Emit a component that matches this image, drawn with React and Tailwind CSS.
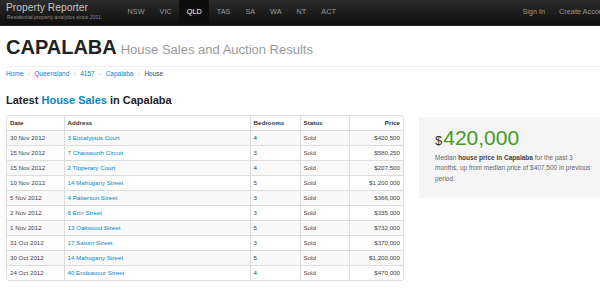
import React from 'react'

const STATES = ['NSW', 'VIC', 'QLD', 'TAS', 'SA', 'WA', 'NT', 'ACT']

const SALES = [
  { date: '30 Nov 2012', address: '3 Eucalyptus Court', beds: 4, price: '$420,500' },
  { date: '15 Nov 2012', address: '7 Chatsworth Circuit', beds: 3, price: '$580,250' },
  { date: '15 Nov 2012', address: '2 Tipperary Court', beds: 4, price: '$207,500' },
  { date: '10 Nov 2012', address: '14 Mahogany Street', beds: 5, price: '$1,200,000' },
  { date: '5 Nov 2012', address: '4 Patterson Street', beds: 3, price: '$366,000' },
  { date: '2 Nov 2012', address: '6 Erin Street', beds: 3, price: '$335,000' },
  { date: '1 Nov 2012', address: '13 Oakwood Street', beds: 5, price: '$732,000' },
  { date: '31 Oct 2012', address: '17 Saturn Street', beds: 3, price: '$370,000' },
  { date: '30 Oct 2012', address: '14 Mahogany Street', beds: 5, price: '$1,200,000' },
  { date: '24 Oct 2012', address: '40 Endeavour Street', beds: 4, price: '$470,000' },
]

const CRUMBS = ['Home', 'Queensland', '4157', 'Capalaba']

export default function App() {
  return (
    <div className="w-[600px] h-[288px] overflow-hidden bg-white" style={{ fontFamily: '"Liberation Sans", Arial, sans-serif' }}>
      <div className="w-[624px]">
        {/* Navbar */}
        <header className="h-[26px] flex items-stretch bg-gradient-to-b from-[#2c2c2c] to-[#0f0f0f] border-b border-[#252525] px-[6px]">
          <div className="w-[114px] flex flex-col pt-[2px]">
            <span className="text-[10.3px] leading-[12px] text-[#c4c4c4]">Property Reporter</span>
            <span className="text-[5.2px] leading-[7px] text-[#8a8a8a] pl-[1px]">Residential property analytics since 2011.</span>
          </div>
          <nav className="flex items-stretch">
            {STATES.map(s => (
              <a key={s}
                className={`flex items-center px-[7.5px] text-[7.3px] ${s === 'QLD' ? 'bg-[#0d0d0d] text-white' : 'text-[#999]'}`}>
                {s}
              </a>
            ))}
          </nav>
          <div className="flex-1" />
          <nav className="flex items-stretch pr-[2px]">
            <a className="flex items-center px-[7px] text-[7.3px] text-[#999]">Sign In</a>
            <a className="flex items-center px-[7px] text-[7.3px] text-[#999]">Create Account</a>
          </nav>
        </header>

        <main className="px-[6px] w-[612px]">
          {/* Page header */}
          <div className="pt-[8px] pb-[6px] border-b border-[#eee] flex items-baseline gap-[4px]">
            <h1 className="text-[20px] leading-[26px] font-bold text-[#222]">CAPALABA</h1>
            <span className="text-[13px] text-[#999]">House Sales and Auction Results</span>
          </div>

          {/* Breadcrumb */}
          <div className="flex items-center mt-[2px] text-[6.5px] leading-[10px]">
            {CRUMBS.map(c => (
              <React.Fragment key={c}>
                <a className="text-[#0088cc]">{c}</a>
                <span className="text-[#bbb] px-[4px] text-[5px]">&gt;</span>
              </React.Fragment>
            ))}
            <span className="text-[#444]">House</span>
          </div>

          <div className="flex gap-[15px] mt-[14px]">
            {/* Sales table */}
            <section className="w-[398px] shrink-0">
              <h2 className="text-[11px] leading-[14px] font-bold text-[#222]">
                Latest <span className="text-[#0088cc]">House Sales</span> in Capalaba
              </h2>
              <div className="mt-[8px] border border-[#ddd] rounded-[3px] overflow-hidden">
                <table className="w-full border-collapse text-[6.2px] text-[#444] table-fixed">
                  <colgroup>
                    <col className="w-[57px]" />
                    <col className="w-[186px]" />
                    <col className="w-[50px]" />
                    <col className="w-[49px]" />
                    <col />
                  </colgroup>
                  <thead>
                    <tr className="h-[14px]">
                      <th className="text-left font-bold px-[3px] text-[#333]">Date</th>
                      <th className="text-left font-bold px-[3px] text-[#333] border-l border-[#ddd]">Address</th>
                      <th className="text-left font-bold px-[3px] text-[#333] border-l border-[#ddd]">Bedrooms</th>
                      <th className="text-left font-bold px-[3px] text-[#333] border-l border-[#ddd]">Status</th>
                      <th className="text-right font-bold px-[3px] text-[#333] border-l border-[#ddd]">Price</th>
                    </tr>
                  </thead>
                  <tbody>
                    {SALES.map((r, i) => (
                      <tr key={i} className={`h-[15px] border-t border-[#ddd] ${i % 2 === 0 ? 'bg-[#f9f9f9]' : 'bg-white'}`}>
                        <td className="px-[3px]">{r.date}</td>
                        <td className="px-[3px] border-l border-[#ddd] text-[#0088cc]">{r.address}</td>
                        <td className="px-[3px] border-l border-[#ddd]">{r.beds}</td>
                        <td className="px-[3px] border-l border-[#ddd]">Sold</td>
                        <td className="px-[3px] border-l border-[#ddd] text-right">{r.price}</td>
                      </tr>
                    ))}
                  </tbody>
                </table>
              </div>
            </section>

            {/* Median box */}
            <aside className="w-[192px] mt-[24px] self-start bg-[#f5f5f5] pl-[16px] pr-[14px] pt-[9px] pb-[14px]">
              <div className="flex items-baseline">
                <span className="text-[13px] text-[#333] mr-[1px]">$</span>
                <span className="text-[21px] leading-[24px] text-[#469b1f]">420,000</span>
              </div>
              <p className="mt-[2px] text-[6.5px] leading-[10.5px] text-[#666]">
                Median <b className="text-[#444]">house price in Capalaba</b> for the past 3 months, up from median price of $407,500 in previous period.
              </p>
            </aside>
          </div>
        </main>
      </div>
    </div>
  )
}
